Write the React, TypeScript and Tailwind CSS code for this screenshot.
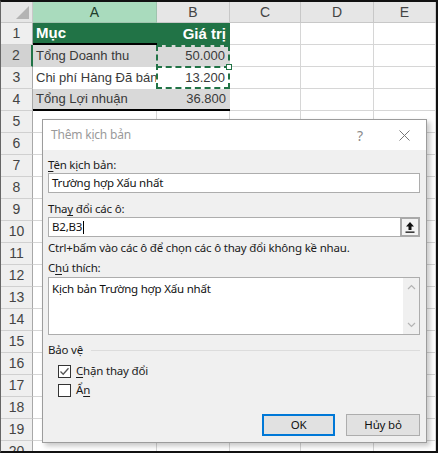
import React from 'react';

const colW = ['w-[124px]', 'w-[73px]', 'w-[71px]', 'w-[73px]', 'w-[62px]'];
const letters = ['A', 'B', 'C', 'D', 'E'];

type Row = { a?: string; b?: string; kind?: 'head' | 'gray' | 'white' };

const rows: Row[] = [
  { a: 'Mục', b: 'Giá trị', kind: 'head' },
  { a: 'Tổng Doanh thu', b: '50.000', kind: 'gray' },
  { a: 'Chi phí Hàng Đã bán', b: '13.200', kind: 'white' },
  { a: 'Tổng Lợi nhuận', b: '36.800', kind: 'gray' },
];

const cellFont = { fontFamily: '"Liberation Sans", Arial, sans-serif' };
const uiFont = { fontFamily: '"Noto Sans", "Liberation Sans", sans-serif' };

const Sheet: React.FC = () => {
  return (
    <div className="flex flex-col text-[#444]" style={cellFont}>
      {/* column headers */}
      <div className="flex h-[21px] shrink-0">
        <div className="w-[32px] h-full bg-[#e6e6e6] border-r border-b border-[#c8c8c8] flex items-end justify-end p-[3px]">
          <div className="w-0 h-0 border-l-[13px] border-l-transparent border-b-[13px] border-b-[#b4b4b4]" />
        </div>
        {letters.map((l, i) => (
          <div
            key={l}
            className={`${colW[i]} h-full flex items-center justify-center text-[14px] border-r border-b ${
              i === 0 ? 'bg-[#a9dbbd] border-[#9fc4ae] text-[#1f3d2c]' : 'bg-[#e6e6e6] border-[#c8c8c8] text-[#444]'
            }`}
          >
            {l}
          </div>
        ))}
      </div>
      {Array.from({ length: 20 }).map((_, r) => {
        const row = rows[r];
        return (
          <div key={r} className="flex h-[22px] shrink-0">
            <div
              className={`w-[32px] h-full flex items-center justify-center text-[14px] border-b border-[#d0d0d0] ${
                r === 1 ? 'bg-[#d2d2d2] border-r-2 border-r-[#217346]' : 'bg-[#efefef] border-r border-r-[#a8a8a8]'
              }`}
            >
              {r + 1}
            </div>
            {letters.map((l, i) => {
              let cls = 'border-r border-b border-[#d6d6d6] bg-white';
              let content: React.ReactNode = null;
              if (row && i < 2) {
                const txt = i === 0 ? row.a : row.b;
                if (row.kind === 'head') {
                  cls = i === 0 ? 'bg-[#217346] border-b-2 border-b-black text-white' : 'bg-[#217346] text-white';
                } else if (row.kind === 'gray') {
                  cls = 'bg-[#d9d9d9] text-[#3a3a3a] border-r border-b border-[#d9d9d9]';
                } else {
                  cls = 'bg-white text-[#3a3a3a] border-r border-b border-white';
                }
                if (r === 3) cls = 'bg-[#d9d9d9] text-[#3a3a3a] border-b-2 border-b-black';
                if (i === 1) cls += ' justify-end';
                content = (
                  <span
                    className={`whitespace-nowrap ${row.kind === 'head' ? 'text-[15px] font-semibold' : 'text-[13px]'} ${
                      i === 0 ? 'pl-[3px]' : 'pr-[4px]'
                    }`}
                  >
                    {txt}
                  </span>
                );
              }
              return (
                <div key={l} className={`${colW[i]} h-full flex items-center overflow-hidden ${cls}`}>
                  {content}
                </div>
              );
            })}
          </div>
        );
      })}
    </div>
  );
};

const Label: React.FC<{ pre: string; u: string; post: string; className?: string }> = ({ pre, u, post, className }) => (
  <div className={`h-[16px] flex items-center text-[11.5px] tracking-[-0.2px] text-[#1a1a1a] ${className ?? ''}`}>
    <span>
      {pre}
      <span className="underline underline-offset-2">{u}</span>
      {post}
    </span>
  </div>
);

const CheckBox: React.FC<{ checked?: boolean }> = ({ checked }) => (
  <div className="w-[13px] h-[13px] border border-[#333] bg-white flex items-center justify-center">
    {checked && (
      <svg width="11" height="11" viewBox="0 0 11 11">
        <path d="M1.5 5.5 L4.2 8.2 L9.5 2.2" fill="none" stroke="#555" strokeWidth="1.3" />
      </svg>
    )}
  </div>
);

const Dialog: React.FC = () => {
  return (
    <div
      className="absolute left-[41px] top-[117px] w-[385px] h-[324px] border border-[#9c9c9c] bg-[#f0f0f0] shadow-[3px_3px_5px_rgba(0,0,0,0.22)] flex flex-col text-[11.5px] tracking-[-0.2px]"
      style={uiFont}
    >
      <div className="h-[30px] bg-white flex items-center pl-[8px] pr-[16px] text-[12px] text-[#9a9a9a]">
        <span>Thêm kịch bản</span>
        <span className="ml-auto text-[14px] text-[#8a8a8a] mr-[36px]">?</span>
        <svg width="11" height="11" viewBox="0 0 11 11">
          <path d="M0.5 0.5 L10.5 10.5 M10.5 0.5 L0.5 10.5" stroke="#777" strokeWidth="1" />
        </svg>
      </div>
      <div className="px-[5px] pr-[6px] flex flex-col">
        <Label pre="" u="T" post="ên kịch bản:" className="mt-[7px]" />
        <div className="h-[20px] bg-white border border-[#adadad] flex items-center pl-[3px] text-[#111]">
          Trường hợp Xấu nhất
        </div>
        <Label pre="Tha" u="y" post=" đổi các ô:" className="mt-[8px]" />
        <div className="h-[20px] bg-white border border-[#adadad] flex items-center pl-[3px] text-[#111]">
          <span>B2,B3</span>
          <span className="w-px h-[13px] bg-black ml-[1px]" />
          <div className="ml-auto h-[20px] w-[20px] -mr-px border-2 border-[#a9a9a9] bg-[#f3f3f3] flex items-center justify-center">
            <svg width="10" height="12" viewBox="0 0 10 12">
              <path d="M5 1 L1 5.5 H3.5 V9 H6.5 V5.5 H9 Z" fill="#111" />
              <rect x="0.5" y="10.5" width="9" height="1.3" fill="#111" />
            </svg>
          </div>
        </div>
        <div className="h-[16px] mt-[3px] flex items-center text-[#1a1a1a]">
          Ctrl+bấm vào các ô để chọn các ô thay đổi không kề nhau.
        </div>
        <Label pre="C" u="h" post="ú thích:" className="mt-[4px]" />
        <div className="h-[58px] mt-[1px] bg-white border border-[#adadad] flex text-[#111]">
          <div className="flex-1 pl-[3px] pt-[2px]">Kịch bản Trường hợp Xấu nhất</div>
          <div className="w-[16px] bg-[#f0f0f0] flex flex-col items-center justify-between py-[6px]">
            <svg width="9" height="6" viewBox="0 0 9 6">
              <path d="M1 5 L4.5 1.5 L8 5" fill="none" stroke="#b4b4b4" strokeWidth="1.2" />
            </svg>
            <svg width="9" height="6" viewBox="0 0 9 6">
              <path d="M1 1 L4.5 4.5 L8 1" fill="none" stroke="#b4b4b4" strokeWidth="1.2" />
            </svg>
          </div>
        </div>
        <div className="h-[16px] mt-[7px] flex items-center text-[#1a1a1a]">
          <span>Bảo vệ</span>
          <div className="flex-1 h-px bg-[#dcdcdc] ml-[8px]" />
        </div>
        <div className="h-[16px] mt-[5px] ml-[10px] flex items-center gap-[5px] text-[#1a1a1a]">
          <CheckBox checked />
          <span>
            <span className="underline underline-offset-2">C</span>hặn thay đổi
          </span>
        </div>
        <div className="h-[16px] mt-[3px] ml-[10px] flex items-center gap-[5px] text-[#1a1a1a]">
          <CheckBox />
          <span>
            Ẩ<span className="underline underline-offset-2">n</span>
          </span>
        </div>
        <div className="mt-[16px] flex justify-end gap-[11px]">
          <button className="w-[73px] h-[22px] border-2 border-[#0078d7] bg-[#e1e1e1] text-[#111]">OK</button>
          <button className="w-[74px] h-[22px] border border-[#adadad] bg-[#e1e1e1] text-[#111]">Hủy bỏ</button>
        </div>
      </div>
    </div>
  );
};

const App: React.FC = () => {
  return (
    <div className="relative w-[438px] h-[453px] overflow-hidden bg-white border-t-2 border-r-2 border-b-2 border-l border-t-[#111] border-r-[#111] border-b-[#111] border-l-[#666]">
      <Sheet />
      {/* copy marquee around B2:B3 */}
      <div className="absolute left-[155px] top-[43px] w-[74px] h-[44px] border-2 border-dashed border-[#217346]" />
      <div className="absolute left-[155px] top-[64px] w-[74px] h-0 border-t-2 border-dashed border-[#217346]" />
      <div className="absolute left-[225px] top-[62px] w-[6px] h-[6px] bg-white border border-[#217346]" />
      <Dialog />
    </div>
  );
};

export default App;
